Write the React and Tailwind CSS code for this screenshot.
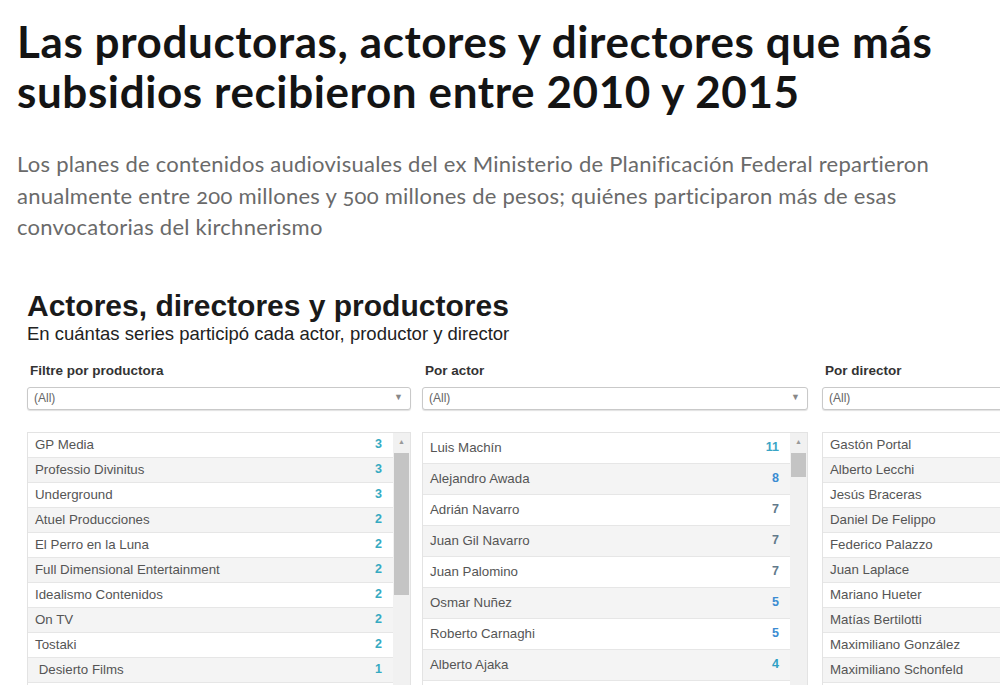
const productoras = [
  ['GP Media', 3],
  ['Professio Divinitus', 3],
  ['Underground', 3],
  ['Atuel Producciones', 2],
  ['El Perro en la Luna', 2],
  ['Full Dimensional Entertainment', 2],
  ['Idealismo Contenidos', 2],
  ['On TV', 2],
  ['Tostaki', 2],
  [' Desierto Films', 1],
];

const actores = [
  ['Luis Machín', 11, 'text-[#3aa5c6]'],
  ['Alejandro Awada', 8, 'text-[#3b8cd2]'],
  ['Adrián Navarro', 7, 'text-[#62798a]'],
  ['Juan Gil Navarro', 7, 'text-[#62798a]'],
  ['Juan Palomino', 7, 'text-[#62798a]'],
  ['Osmar Nuñez', 5, 'text-[#3b8cd2]'],
  ['Roberto Carnaghi', 5, 'text-[#3b8cd2]'],
  ['Alberto Ajaka', 4, 'text-[#2e9fc4]'],
];

const directores = [
  'Gastón Portal',
  'Alberto Lecchi',
  'Jesús Braceras',
  'Daniel De Felippo',
  'Federico Palazzo',
  'Juan Laplace',
  'Mariano Hueter',
  'Matías Bertilotti',
  'Maximiliano González',
  'Maximiliano Schonfeld',
];

function Dropdown({ label, arrow = true, className }) {
  return (
    <div className={`shrink-0 ${className}`}>
      <div className="h-[20px] text-[13.5px] font-bold text-[#333] leading-[20px] pl-[3px]">{label}</div>
      <div className="mt-[6px] h-[23px] flex items-center justify-between border border-[#c9c9c9] rounded-[3px] bg-white px-[6px] shadow-[0_1px_1px_rgba(0,0,0,0.12)]">
        <span className="text-[12px] text-[#666]">(All)</span>
        {arrow && <span className="text-[9px] text-[#888] mr-[1px]">▼</span>}
      </div>
    </div>
  );
}

function Scrollbar({ thumb }) {
  return (
    <div className="w-[17px] shrink-0 bg-[#f1f1f1] flex flex-col items-center">
      <div className="h-[20px] flex items-center justify-center text-[7px] text-[#999]">▲</div>
      <div className={`w-[15px] bg-[#c4c4c4] ${thumb}`} />
    </div>
  );
}

function Row({ name, value, color, height, shade }) {
  return (
    <div
      className={`flex items-center justify-between pl-[7px] pr-[11px] border-b border-[#e6e6e6] ${height} ${shade ? 'bg-[#f4f4f4]' : 'bg-white'}`}
    >
      <span className="text-[13.3px] text-[#555] whitespace-pre">{name}</span>
      {value != null && <span className={`text-[12.5px] font-bold ${color}`}>{value}</span>}
    </div>
  );
}

export default function App() {
  return (
    <div className="w-[1000px] h-[685px] overflow-hidden bg-white">
      {/* Nota */}
      <div className="pl-[17px] pt-[16px]">
        <h1 className="text-[44px] leading-[50px] font-bold text-[#141414] whitespace-nowrap tracking-[0.6px] [font-family:Lato,sans-serif]">
          Las productoras, actores y directores que más
          <br />
          subsidios recibieron entre 2010 y 2015
        </h1>
        <p className="mt-[32px] text-[22px] leading-[31.5px] text-[#6a6a6a] whitespace-nowrap tracking-[0.25px] oldstyle-nums [font-family:Lato,sans-serif]">
          Los planes de contenidos audiovisuales del ex Ministerio de Planificación Federal repartieron
          <br />
          anualmente entre 200 millones y 500 millones de pesos; quiénes participaron más de esas
          <br />
          convocatorias del kirchnerismo
        </p>
      </div>

      {/* Tablero */}
      <div className="pl-[27px] mt-[47px] [font-family:'Liberation_Sans',Arial,sans-serif]">
        <h2 className="text-[30px] leading-[32px] font-bold text-[#1a1a1a]">Actores, directores y productores</h2>
        <p className="mt-[1px] text-[18.5px] leading-[22px] text-[#222]">En cuántas series participó cada actor, productor y director</p>

        <div className="mt-[16px] flex">
          <Dropdown label="Filtre por productora" className="w-[384px] mr-[11px]" />
          <Dropdown label="Por actor" className="w-[386px] mr-[14px]" />
          <Dropdown label="Por director" arrow={false} className="w-[386px]" />
        </div>

        <div className="mt-[22px] flex items-start">
          {/* Productoras */}
          <div className="w-[384px] mr-[11px] h-[270px] overflow-hidden shrink-0 flex border border-[#e3e3e3]">
            <div className="flex-1">
              {productoras.map(([n, v], i) => (
                <Row key={n} name={n} value={v} color="text-[#36aac2]" height="h-[25px]" shade={i % 2 === 1} />
              ))}
            </div>
            <Scrollbar thumb="h-[142px]" />
          </div>

          {/* Actores */}
          <div className="w-[386px] mr-[14px] h-[270px] overflow-hidden shrink-0 flex border border-[#e3e3e3]">
            <div className="flex-1">
              {actores.map(([n, v, c], i) => (
                <Row key={n} name={n} value={v} color={c} height="h-[31px]" shade={i % 2 === 1} />
              ))}
            </div>
            <Scrollbar thumb="h-[24px]" />
          </div>

          {/* Directores */}
          <div className="w-[386px] h-[270px] overflow-hidden shrink-0 border border-[#e3e3e3]">
            {directores.map((n, i) => (
              <Row key={n} name={n} height="h-[25px]" shade={i % 2 === 1} />
            ))}
          </div>
        </div>
      </div>
    </div>
  );
}
